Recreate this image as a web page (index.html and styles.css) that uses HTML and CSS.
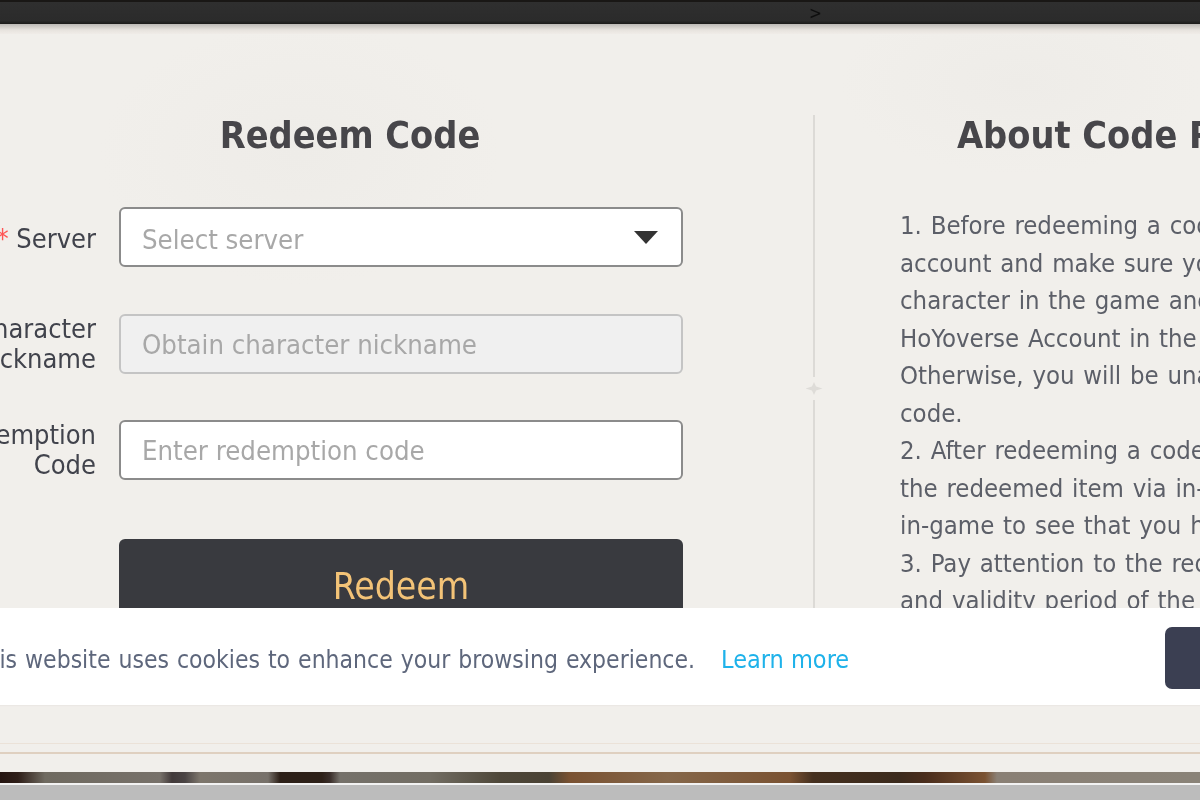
FILE: index.html
```html
<!DOCTYPE html>
<html lang="en">
<head>
<meta charset="utf-8">
<title>Redeem Code</title>
<link rel="stylesheet" href="styles.css">
</head>
<body>
<div class="stage">
  <header class="topbar">
    <div class="topbar-edge"></div>
    <div class="topbar-main"><span class="crumb">&gt;</span></div>
  </header>
  <main class="panel">
    <div class="panel-shade"></div>
    <div class="columns">
      <section class="redeem">
        <h1 class="redeem-title">Redeem Code</h1>
        <form class="form">
          <div class="row row-server">
            <label class="label label-server"><span class="req">*</span> Server</label>
            <div class="field field-select"><span class="ph ph-select">Select server</span><span class="caret"></span></div>
          </div>
          <div class="row row-nick">
            <label class="label">Character<br>Nickname</label>
            <div class="field field-disabled"><span class="ph">Obtain character nickname</span></div>
          </div>
          <div class="row row-code">
            <label class="label">Redemption<br>Code</label>
            <div class="field"><span class="ph">Enter redemption code</span></div>
          </div>
          <div class="row row-btn">
            <div class="label"></div>
            <button type="button" class="redeem-btn">Redeem</button>
          </div>
        </form>
      </section>
      <div class="divider"><span class="divider-line"></span><span class="divider-star"></span><span class="divider-line divider-long"></span></div>
      <section class="about">
        <h2 class="about-title">About Code Redemption</h2>
        <p class="about-text">1. Before redeeming a code, please log in to your<br>account and make sure you have created a<br>character in the game and linked it to your<br>HoYoverse Account in the User Center.<br>Otherwise, you will be unable to redeem the<br>code.<br>2. After redeeming a code, you will receive<br>the redeemed item via in-game mail. Check<br>in-game to see that you have received it.<br>3. Pay attention to the redemption conditions<br>and validity period of the redemption code.</p>
      </section>
    </div>
    <div class="rules">
      <div class="rule-thin"></div>
      <div class="rule-thick"></div>
    </div>
  </main>
  <div class="strip"></div>
  <div class="strip-gap"></div>
  <div class="bottom"></div>
  <div class="cookie">
    <p class="cookie-text">This website uses cookies to enhance your browsing experience.</p>
    <a class="cookie-link" href="#">Learn more</a>
    <button type="button" class="cookie-btn">OK</button>
  </div>
</div>
</body>
</html>
```
FILE: styles.css
```css
* { box-sizing: border-box; }
html, body { margin: 0; padding: 0; background: #bcbcbc; }
body { font-family: "DejaVu Sans", sans-serif; font-stretch: condensed; }
.stage {
  position: relative;
  width: 1200px;
  height: 800px;
  overflow: hidden;
  display: flex;
  flex-direction: column;
  filter: blur(0.45px);
}
.topbar { height: 24px; flex: none; display: flex; flex-direction: column; }
.topbar-edge { height: 5px; background: #191715; }
.topbar-main {
  flex: 1;
  background: linear-gradient(#2f2f2f, #2b2b2b 85%, #1b1a19);
  padding-left: 809px;
  color: #0e0e0e;
  font-size: 17px;
}
.crumb { display: block; line-height: 22px; }
.panel {
  height: 748px;
  flex: none;
  background:
    radial-gradient(ellipse 200px 130px at 300px 130px, #eeece8, transparent),
    radial-gradient(ellipse 180px 90px at 1020px 60px, #eeece8, transparent),
    #f1efeb;
  display: flex;
  flex-direction: column;
  overflow: hidden;
}
.panel-shade { height: 10px; flex: none; background: linear-gradient(#bcb9b5, #e7e3de 60%, #f0ece8); }
.columns { flex: none; height: 699px; display: flex; }
.redeem { width: 743px; margin-left: -60px; flex: none; padding-top: 74px; }
.redeem-title {
  margin: 0 0 45px 77px;
  text-align: center;
  font-size: 37.5px;
  line-height: 54px;
  font-weight: 700;
  color: #47464a;
}
.form { display: flex; flex-direction: column; }
.row { display: flex; align-items: center; gap: 23px; }
.row-nick { margin-top: 47px; }
.row-code { margin-top: 46px; }
.row-btn { margin-top: 59px; }
.label {
  width: 156px;
  flex: none;
  text-align: right;
  font-size: 27px;
  line-height: 30px;
  color: #41434c;
  white-space: nowrap;
}
.label-server { padding-top: 3px; }
.req { color: #f55; }
.field {
  flex: 1;
  height: 60px;
  padding: 0 21px;
  display: flex;
  align-items: center;
  justify-content: space-between;
  background: #fff;
  border: 2px solid #8b8b8b;
  border-radius: 6px;
}
.field-disabled { background: #f0f0f0; border-color: #c4c4c4; }
.ph { font-size: 27.3px; color: #a8a8a8; }
.ph-select { padding-top: 4px; }
.caret {
  width: 0;
  height: 0;
  margin: 1px 2px 0 0;
  border-left: 12.5px solid transparent;
  border-right: 12.5px solid transparent;
  border-top: 13px solid #333;
}
.redeem-btn {
  flex: 1;
  height: 94px;
  border: 0;
  border-radius: 6px;
  background: #393a3f;
  color: #f3c377;
  font-family: "DejaVu Sans", sans-serif;
  font-stretch: condensed;
  font-size: 37px;
  padding: 0;
}
.divider {
  flex: none;
  width: 2px;
  margin: 81px 0 0 130px;
  display: flex;
  flex-direction: column;
  align-items: center;
}
.divider-line { width: 2px; height: 262px; flex: none; background: #dcdad6; }
.divider-long { height: 300px; }
.divider-star {
  width: 17px;
  height: 13px;
  margin: 5px 0;
  flex: none;
  background: #dedcd8;
  clip-path: polygon(50% 0, 62% 35%, 100% 50%, 62% 65%, 50% 100%, 38% 65%, 0 50%, 38% 35%);
}
.about { flex: none; width: 640px; margin-left: 85px; padding-top: 74px; }
.about-title {
  margin: 0 0 45px 57px;
  font-size: 37.5px;
  line-height: 54px;
  font-weight: 700;
  color: #47464a;
  white-space: nowrap;
}
.about-text {
  margin: 0;
  font-size: 25.5px;
  word-spacing: 1.5px;
  line-height: 37.5px;
  color: #5c5f68;
  white-space: nowrap;
}
.rules { flex: 1; padding-top: 10px; }
.rule-thin { height: 1px; background: #ebe2d8; }
.rule-thick { height: 2px; margin-top: 8px; background: #dfd0c0; }
.strip {
  height: 11px;
  flex: none;
  background: linear-gradient(90deg, #241410 0, #2e1e18 18px, #6f6a60 45px, #77716a 160px, #423a3a 172px, #4a4444 185px, #7d766c 200px, #77716a 268px, #2d2018 280px, #2d2018 322px, #3a2e2a 330px, #75716a 340px, #726d63 430px, #4e4739 500px, #4a4234 549px, #7a5232 570px, #85674a 668px, #7a5232 790px, #45301f 813px, #3b2a1c 900px, #4a2d1c 925px, #7a5232 985px, #8a8075 997px, #8a8378 1200px);
}
.strip-gap { height: 2px; flex: none; background: #f2f2f2; }
.bottom { flex: 1; background: #bcbcbc; }
.cookie {
  position: absolute;
  left: -28px;
  top: 608px;
  width: 1360px;
  height: 97px;
  display: flex;
  align-items: center;
  background: #fff;
  box-shadow: 0 1px 1px #ebe8e4;
}
.cookie-text { margin: 0 26px 0 0; padding-top: 6px; font-size: 24.5px; word-spacing: 1px; color: #5e677c; white-space: nowrap; }
.cookie-link { padding-top: 6px; font-size: 25px; color: #1eb2ea; text-decoration: none; white-space: nowrap; }
.cookie-btn {
  margin: 3px 0 0 316px;
  width: 160px;
  height: 62px;
  border: 0;
  border-radius: 7px;
  background: #3b3f52;
  color: #fff;
  font-family: "DejaVu Sans", sans-serif;
  font-size: 24px;
}
```
